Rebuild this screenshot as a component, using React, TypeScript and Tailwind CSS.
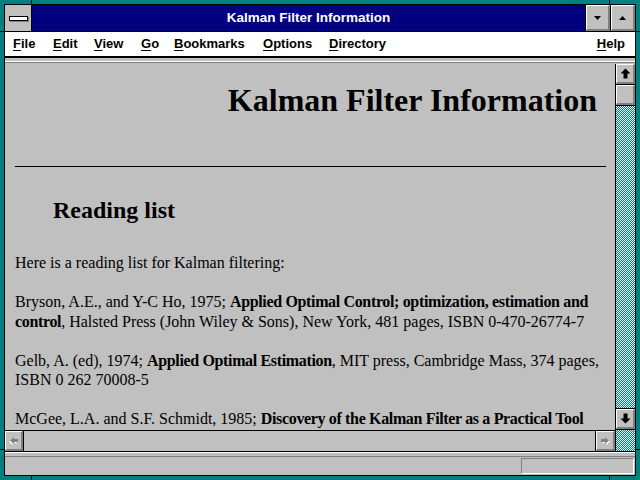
import type { ReactNode } from "react";

const MENU = [
  { label: "File", w: "w-[40px]" },
  { label: "Edit", w: "w-[41px]" },
  { label: "View", w: "w-[47px]" },
  { label: "Go", w: "w-[33px]" },
  { label: "Bookmarks", w: "w-[89px]" },
  { label: "Options", w: "w-[66px]" },
  { label: "Directory", w: "w-[80px]" },
];

// raised 3D face used by every button
function Bevel({ children }: { children: ReactNode }) {
  return (
    <div className="flex h-full w-full items-center justify-center border-t border-l border-t-white border-l-white border-r-2 border-b-2 border-r-[#808080] border-b-[#808080] bg-[#c0c0c0]">
      {children}
    </div>
  );
}

function Dither({ className = "" }: { className?: string }) {
  return (
    <div
      className={`bg-[repeating-conic-gradient(#008080_0%_25%,#f0f0f0_0%_50%)] bg-[length:2px_2px] ${className}`}
    />
  );
}

function BigArrow({ down = false }: { down?: boolean }) {
  return (
    <svg width="11" height="11" viewBox="0 0 11 11" className={down ? "rotate-180" : ""}>
      <path d="M5.5 0.5 L10.5 5.5 H7.5 V10.5 H3.5 V5.5 H0.5 Z" fill="#000" />
    </svg>
  );
}

function GreyArrow({ right = false }: { right?: boolean }) {
  return (
    <svg width="11" height="9" viewBox="0 0 11 9" className={right ? "" : "-scale-x-100"}>
      <path d="M1 3 H5 V1 L9 4.5 L5 8 V6 H1 Z" fill="#fff" transform="translate(1 1)" />
      <path d="M1 3 H5 V1 L9 4.5 L5 8 V6 H1 Z" fill="#808080" />
    </svg>
  );
}

function B({ children }: { children: ReactNode }) {
  return <b className="tracking-[-0.35px]">{children}</b>;
}

export default function App() {
  return (
    <div className="relative h-[480px] w-[640px] bg-[#008080] p-[4px] font-['Liberation_Sans',Arial,sans-serif]">
      {/* frame resize marks */}
      <div className="absolute left-[31px] top-0 h-[4px] w-px bg-black" />
      <div className="absolute left-[609px] top-0 h-[4px] w-px bg-black" />
      <div className="absolute left-[31px] bottom-0 h-[4px] w-px bg-black" />
      <div className="absolute left-[609px] bottom-0 h-[4px] w-px bg-black" />
      <div className="absolute left-0 top-[31px] h-px w-[4px] bg-black" />
      <div className="absolute right-0 top-[31px] h-px w-[4px] bg-black" />
      <div className="absolute left-0 top-[449px] h-px w-[4px] bg-black" />
      <div className="absolute right-0 top-[449px] h-px w-[4px] bg-black" />

      <div className="flex h-full flex-col border border-black bg-[#c0c0c0]">
        {/* title bar */}
        <div className="flex h-[27px] shrink-0 border-b border-black">
          <div className="flex w-[27px] items-center justify-center border-r border-black bg-[#c0c0c0]">
            <div className="h-[5px] w-[19px] border border-black bg-white shadow-[1px_1px_0_#808080]" />
          </div>
          <div className="flex flex-1 items-center justify-center bg-[#000080] text-[13.5px] font-bold text-white">
            Kalman Filter Information
          </div>
          <div className="w-[25px] border-l border-black">
            <Bevel>
              <svg width="7" height="4" viewBox="0 0 7 4">
                <path d="M0 0 H7 L3.5 4 Z" fill="#000" />
              </svg>
            </Bevel>
          </div>
          <div className="w-[25px] border-l border-black">
            <Bevel>
              <svg width="7" height="4" viewBox="0 0 7 4">
                <path d="M0 4 H7 L3.5 0 Z" fill="#000" />
              </svg>
            </Bevel>
          </div>
        </div>

        {/* menu bar */}
        <div className="flex h-[26px] shrink-0 items-center border-b-2 border-black bg-white pl-[8px] pr-[10px] text-[13px] font-bold text-black">
          {MENU.map((m) => (
            <span key={m.label} className={m.w}>
              <span className="underline decoration-1 underline-offset-2">{m.label[0]}</span>
              {m.label.slice(1)}
            </span>
          ))}
          <span className="ml-auto">
            <span className="underline decoration-1 underline-offset-2">H</span>elp
          </span>
        </div>

        {/* frame edge */}
        <div className="h-[3px] shrink-0 bg-[#c0c0c0]" />
        <div className="h-px shrink-0 bg-white" />
        <div className="h-px shrink-0 bg-[#808080]" />
        <div className="h-px shrink-0 bg-[#c0c0c0]" />

        {/* document + scrollbars */}
        <div className="flex h-[388px] shrink-0 border-b border-black">
          <div className="flex min-w-0 flex-1 flex-col">
            <div className="flex-1 overflow-hidden pl-[10px] pr-[9px] font-['Liberation_Serif','Times_New_Roman',serif] text-black">
              <h1 className="mr-[9px] mt-[18px] whitespace-nowrap text-right text-[32px] font-bold leading-[37px]">
                Kalman Filter Information
              </h1>
              <div className="mt-[47px] h-px bg-black" />
              <h2 className="ml-[38px] mt-[29px] text-[24px] font-bold leading-[28px]">Reading list</h2>
              <div className="mt-[29px] text-[16px] leading-[19.5px]">
                <p>Here is a reading list for Kalman filtering:</p>
                <p className="mt-[19.5px] whitespace-nowrap">
                  Bryson, A.E., and Y-C Ho, 1975;{" "}
                  <B>Applied Optimal Control; optimization, estimation and</B>
                  <br />
                  <B>control</B>, Halsted Press (John Wiley &amp; Sons), New York, 481 pages, ISBN 0-470-26774-7
                </p>
                <p className="mt-[19.5px] whitespace-nowrap">
                  Gelb, A. (ed), 1974; <B>Applied Optimal Estimation</B>, MIT press, Cambridge Mass, 374 pages,
                  <br />
                  ISBN 0 262 70008-5
                </p>
                <p className="mt-[19.5px] whitespace-nowrap">
                  McGee, L.A. and S.F. Schmidt, 1985; <B>Discovery of the Kalman Filter as a Practical Tool</B>
                </p>
              </div>
            </div>
            {/* horizontal scrollbar */}
            <div className="flex h-[21px] shrink-0 border-t border-black">
              <div className="w-[19px] border-r border-black">
                <Bevel>
                  <GreyArrow />
                </Bevel>
              </div>
              <div className="flex-1 bg-[#c0c0c0]" />
              <div className="w-[20px] border-l border-black">
                <Bevel>
                  <GreyArrow right />
                </Bevel>
              </div>
            </div>
          </div>

          {/* vertical scrollbar */}
          <div className="flex w-[20px] shrink-0 flex-col border-l border-black">
            <div className="h-[21px] border-b border-black">
              <Bevel>
                <BigArrow />
              </Bevel>
            </div>
            <div className="h-[21px] border-b border-black">
              <Bevel>{null}</Bevel>
            </div>
            <Dither className="flex-1" />
            <div className="h-[22px] border-y border-black">
              <Bevel>
                <BigArrow down />
              </Bevel>
            </div>
            <Dither className="h-[21px]" />
          </div>
        </div>

        {/* status bar */}
        <div className="h-[5px] shrink-0 border-t border-white border-b border-b-[#808080] bg-[#c0c0c0]" />
        <div className="flex flex-1 items-center justify-end pr-px">
          <div className="h-[16px] w-[113px] border-t border-l border-t-[#808080] border-l-[#808080] border-b border-r border-b-white border-r-white" />
        </div>
      </div>
    </div>
  );
}
